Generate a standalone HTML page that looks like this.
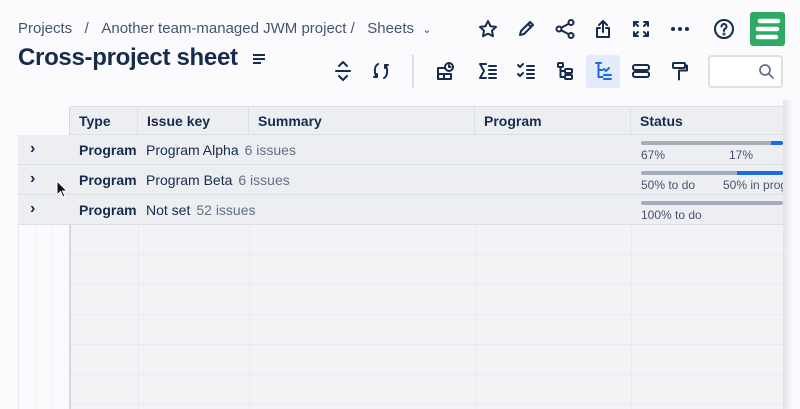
<!DOCTYPE html>
<html><head><style>
*{box-sizing:border-box;margin:0;padding:0}
body{width:800px;height:409px;overflow:hidden;background:#fbfbfd;font-family:"Liberation Sans",sans-serif;color:#172b4d;position:relative}
.a{position:absolute}
.ic{position:absolute;width:22px;height:22px;transform:translate(-11px,-11px)}
.ic svg{width:22px;height:22px;fill:none;stroke:#172b4d;stroke-width:2;stroke-linecap:round;stroke-linejoin:round}
.hc{position:absolute;top:107px;height:28px;border-right:1px solid #dcdfe4;font-weight:bold;font-size:14px;line-height:28px;padding-left:9px;background:#eceef2}
.row{position:absolute;left:18px;width:765px;height:30px;background:#eceef2;border-bottom:1px solid #dcdfe4}
.row .ch{position:absolute;left:12px;top:5px;font-size:16px;font-weight:bold}
.row .t{position:absolute;left:61px;top:7px;font-size:14px;font-weight:bold}
.row .k{position:absolute;left:128px;top:7px;font-size:14px}
.row .k span{color:#626f86;margin-left:6px}
.bar{position:absolute;left:623px;top:6px;height:4px;width:142px;background:#a5adba;border-radius:2px;overflow:hidden}
.bar i{position:absolute;top:0;height:4px;background:#1d6ae5;right:0}
.pt{position:absolute;top:13px;font-size:12px;color:#44546f;white-space:nowrap}
</style></head><body>
<div class="a" style="left:18px;top:20px;font-size:15px;color:#44546f;white-space:nowrap">Projects&nbsp;&nbsp;&nbsp;/&nbsp;&nbsp;&nbsp;Another team-managed JWM project /&nbsp;&nbsp;&nbsp;Sheets&nbsp;&nbsp;<span style="font-size:11px">&#8964;</span></div>
<div class="a" style="left:18px;top:44px;font-size:24px;font-weight:bold;letter-spacing:-0.3px">Cross-project sheet</div>
<div class="a" style="left:253px;top:54px;width:12px"><div style="height:2px;background:#172b4d;margin-bottom:2px"></div><div style="height:2px;background:#172b4d;margin-bottom:2px"></div><div style="height:2px;width:8px;background:#172b4d"></div></div>

<div class="ic" style="left:488px;top:29px"><svg viewBox="0 0 22 22"><path d="M11 3l2.5 5.2 5.5.7-4 3.8 1 5.5L11 15.6 6 18.2l1-5.5-4-3.8 5.5-.7z"/></svg></div>
<div class="ic" style="left:526px;top:29px"><svg viewBox="0 0 22 22"><path d="M5 17l1-4 9-9 3 3-9 9zM13 6l3 3"/></svg></div>
<div class="ic" style="left:565px;top:29px"><svg viewBox="0 0 22 22"><circle cx="5" cy="11" r="2.5"/><circle cx="17" cy="4.5" r="2.5"/><circle cx="17" cy="17.5" r="2.5"/><path d="M7.2 9.8l7.6-4M7.2 12.2l7.6 4"/></svg></div>
<div class="ic" style="left:603px;top:29px"><svg viewBox="0 0 22 22"><path d="M11 3v11M7 7l4-4 4 4M8 10H5v9h12v-9h-3"/></svg></div>
<div class="ic" style="left:641px;top:29px"><svg viewBox="0 0 22 22"><path d="M4 8V4h4M14 4h4v4M18 14v4h-4M8 18H4v-4M4 4l4 4M18 4l-4 4M18 18l-4-4M4 18l4-4"/></svg></div>
<div class="ic" style="left:680px;top:29px"><svg viewBox="0 0 22 22" style="fill:#172b4d;stroke:none"><circle cx="4" cy="11" r="2"/><circle cx="11" cy="11" r="2"/><circle cx="18" cy="11" r="2"/></svg></div>
<div class="ic" style="left:724px;top:29px"><svg viewBox="0 0 22 22"><circle cx="11" cy="11" r="9"/><path d="M8.5 8.5a2.5 2.5 0 1 1 3.5 2.3c-.7.3-1 .8-1 1.5v.7"/><circle cx="11" cy="16" r=".5"/></svg></div>
<div class="a" style="left:750px;top:12px;width:35px;height:34px;background:#2daa64;border-radius:3px">
<svg width="35" height="34" viewBox="0 0 35 34"><g stroke="#fff" stroke-width="4.5" stroke-linecap="round"><path d="M10 9h18M8 17h19M8 25h18"/></g></svg></div>

<div class="ic" style="left:343px;top:71px"><svg viewBox="0 0 22 22"><path d="M4 11h14M7 6l4-4 4 4M7 16l4 4 4-4"/></svg></div>
<div class="ic" style="left:381px;top:71px"><svg viewBox="0 0 22 22"><path d="M8 4C4 6 4 14 7 17M7 17H4M7 17v-3M14 18c4-2 4-10 1-13M15 5h3M15 5v3"/></svg></div>
<div class="a" style="left:412px;top:55px;width:2px;height:33px;background:#dcdfe4"></div>
<div class="ic" style="left:445px;top:71px"><svg viewBox="0 0 22 22"><path d="M11 8H4v11h13v-5M4 14h13M10 14v5"/><circle cx="15" cy="7" r="4"/><path d="M15 5v2h1.5"/></svg></div>
<div class="ic" style="left:488px;top:71px"><svg viewBox="0 0 22 22"><path d="M9 4H3l4 7-4 7h6M12 6h7M12 10h7M12 14h7M12 18h7"/></svg></div>
<div class="ic" style="left:526px;top:71px"><svg viewBox="0 0 22 22"><path d="M3 5l2 2 3-3M3 14l2 2 3-3M12 6h7M12 10h7M12 14h7M12 18h7"/></svg></div>
<div class="ic" style="left:565px;top:71px"><svg viewBox="0 0 22 22"><rect x="4" y="3" width="5" height="4" rx="1"/><path d="M6.5 7v10h4M6.5 11h4"/><rect x="11" y="9" width="7" height="4" rx="1"/><rect x="11" y="15" width="7" height="4" rx="1"/></svg></div>
<div class="a" style="left:586px;top:55px;width:34px;height:33px;background:#e4ecfb;border-radius:3px"></div>
<div class="ic" style="left:603px;top:71px"><svg viewBox="0 0 22 22" style="stroke:#1d6ae5"><path d="M4 3h5M6.5 3v14h4M6.5 10h4M12 9l2 2 3-3M12 15h7M12 19h7"/></svg></div>
<div class="ic" style="left:641px;top:71px"><svg viewBox="0 0 22 22"><rect x="3" y="5" width="16" height="5" rx="2"/><rect x="3" y="12" width="16" height="5" rx="2"/></svg></div>
<div class="ic" style="left:680px;top:71px"><svg viewBox="0 0 22 22"><rect x="4" y="3" width="12" height="5" rx="1"/><path d="M16 5.5h2v5h-8v3M10 13.5v6"/></svg></div>
<div class="a" style="left:708px;top:55px;width:75px;height:33px;border:2px solid #dcdfe4;border-radius:4px;background:#fff"></div>
<div class="ic" style="left:766px;top:71px"><svg viewBox="0 0 22 22" style="stroke:#626f86;stroke-width:1.7"><circle cx="10" cy="10" r="5"/><path d="M14 14l4 4"/></svg></div>

<div class="a" style="left:70px;top:224px;width:713px;height:185px;background:#f3f3f6;
background-image:linear-gradient(#eaebef 1px,transparent 1px);background-size:100% 30px;background-position:0 30px"></div>
<div class="a" style="left:138px;top:224px;width:1px;height:185px;background:#eaebef"></div>
<div class="a" style="left:249px;top:224px;width:1px;height:185px;background:#eaebef"></div>
<div class="a" style="left:475px;top:224px;width:1px;height:185px;background:#eaebef"></div>
<div class="a" style="left:631px;top:224px;width:1px;height:185px;background:#eaebef"></div>
<div class="a" style="left:18px;top:135px;width:1px;height:274px;background:#e6e8ec"></div>
<div class="a" style="left:35px;top:224px;width:1px;height:185px;background:#f0f1f4"></div>
<div class="a" style="left:52px;top:224px;width:1px;height:185px;background:#f0f1f4"></div>
<div class="a" style="left:69px;top:107px;width:2px;height:302px;background:#d6d9de"></div>

<div class="a" style="left:70px;top:106px;width:713px;height:1px;background:#dcdfe4"></div>
<div class="hc" style="left:70px;width:68px">Type</div>
<div class="hc" style="left:138px;width:111px">Issue key</div>
<div class="hc" style="left:249px;width:226px">Summary</div>
<div class="hc" style="left:475px;width:156px">Program</div>
<div class="hc" style="left:631px;width:152px;border-right:none">Status</div>
<div class="a" style="left:70px;top:134px;width:713px;height:1px;background:#dcdfe4"></div>

<div class="row" style="top:135px"><div class="ch">›</div><div class="t">Program</div><div class="k">Program Alpha<span>6 issues</span></div>
<div class="bar"><i style="width:12px"></i></div><div class="pt" style="left:623px">67%</div><div class="pt" style="left:711px">17%</div></div>
<div class="row" style="top:165px"><div class="ch">›</div><div class="t">Program</div><div class="k">Program Beta<span>6 issues</span></div>
<div class="bar"><i style="width:46px"></i></div><div class="pt" style="left:623px">50% to do</div><div class="pt" style="left:705px;width:60px;overflow:hidden">50% in progress</div></div>
<div class="row" style="top:195px"><div class="ch">›</div><div class="t">Program</div><div class="k">Not set<span>52 issues</span></div>
<div class="bar"></div><div class="pt" style="left:623px">100% to do</div></div>

<div class="a" style="left:783px;top:100px;width:17px;height:309px;background:linear-gradient(90deg,#e3e4e8,#fbfbfd 10px)"></div>
<svg class="a" style="left:56px;top:180px" width="12" height="18" viewBox="0 0 12 18"><path d="M1 1v14l3.5-3.5 2.5 5.5 2-1-2.5-5H11z" fill="#111" stroke="#fff" stroke-width="1"/></svg>
</body></html>
